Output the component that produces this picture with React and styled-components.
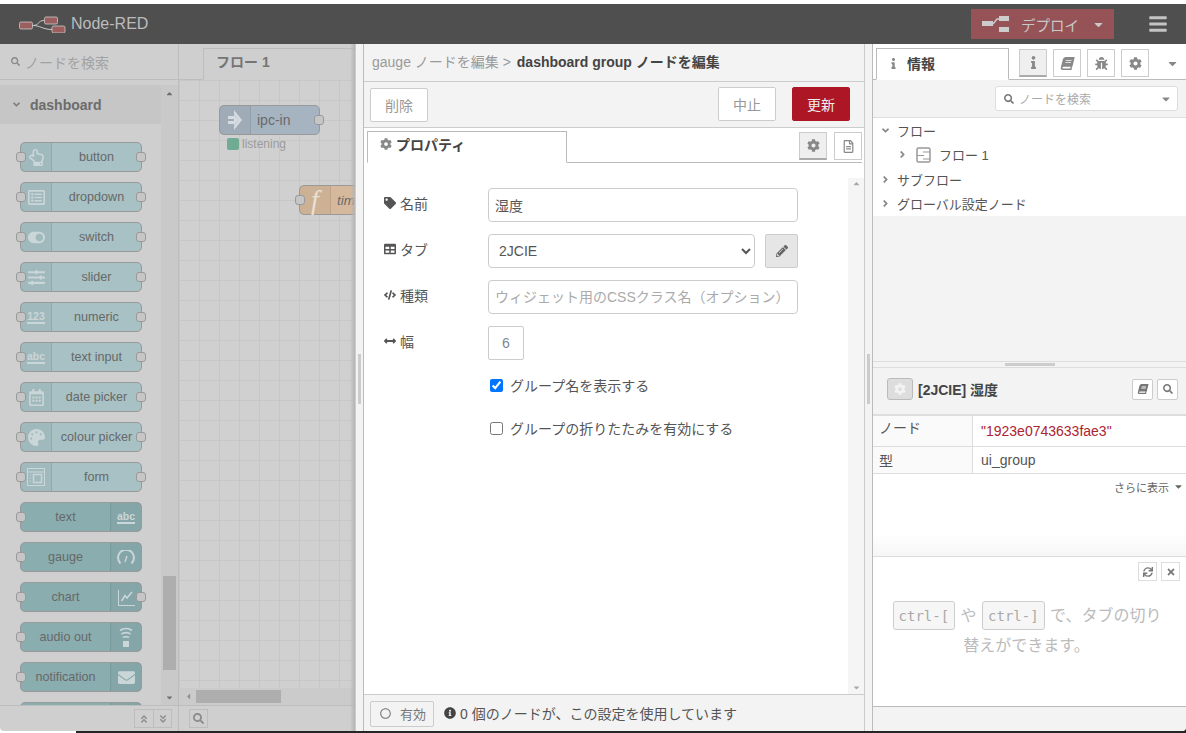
import React from "react";
import styled, { createGlobalStyle } from "styled-components";
import {
  FaRegHandPointUp, FaRegListAlt, FaToggleOn, FaSlidersH, FaRegCalendarAlt, FaPalette,
  FaEnvelope, FaSearch, FaCog, FaTag, FaTable, FaCode, FaArrowsAltH, FaPencilAlt,
  FaInfo, FaBook, FaBug, FaCaretDown, FaCaretUp, FaCaretLeft, FaBars, FaAngleDown, FaAngleRight,
  FaAngleDoubleUp, FaAngleDoubleDown, FaRegFileAlt, FaSync, FaTimes, FaInfoCircle, FaRegCircle,
} from "react-icons/fa";

const UI_FONT = `"Liberation Sans", "Noto Sans CJK JP", sans-serif`;

const GlobalStyle = createGlobalStyle`
  html, body { margin: 0; padding: 0; height: 100%; }
  body {
    background: linear-gradient(90deg, #fff 76px, #262626 76px);
    font-family: ${UI_FONT};
    font-size: 14px;
    overflow: hidden;
  }
  * { box-sizing: border-box; }
`;

const Shell = styled.div`
  width: 1186px;
  height: 733px;
  display: flex;
  flex-direction: column;
  background: linear-gradient(#fff 4px, transparent 4px);
  padding-top: 4px;
  padding-bottom: 2px;
`;

/* header */
const Header = styled.header`
  height: 40px;
  flex: none;
  background: #4f4f4f;
  display: flex;
  align-items: center;
  padding-left: 19px;
`;
const Brand = styled.div`
  display: flex;
  align-items: center;
  gap: 5px;
  color: #bcbcbc;
  font-size: 16px;
`;
const Deploy = styled.div`
  margin-left: auto;
  width: 143px;
  height: 30px;
  background: #955357;
  color: #c9c9c9;
  display: flex;
  align-items: center;
  padding-left: 11px;
  font-size: 14.5px;
  svg:first-child { margin-right: 12px; }
`;
const DeployCaret = styled(FaCaretDown)`
  margin-left: auto;
  margin-right: 9px;
  font-size: 13px;
`;
const Burger = styled(FaBars)`
  margin: 0 19px 0 35px;
  font-size: 18px;
  color: #c4c4c4;
  width: 18px;
  height: 20px;
`;

const Body = styled.div`
  flex: 1;
  min-height: 0;
  display: flex;
  border-radius: 0 0 4px 4px;
  overflow: hidden;
`;

/* palette */
const Palette = styled.aside`
  width: 179px;
  flex: none;
  background: #cfcfcf;
  border-right: 1px solid #bdbdbd;
  display: flex;
  flex-direction: column;
`;
const PaletteSearch = styled.div`
  height: 36px;
  flex: none;
  border-bottom: 1px solid #bdbdbd;
  display: flex;
  align-items: center;
  gap: 5px;
  padding-left: 11px;
  color: #a2a2a2;
  font-size: 14px;
  svg { font-size: 9px; color: #8a8a8a; }
`;
const PaletteBody = styled.div`
  flex: 1;
  min-height: 0;
  display: flex;
  padding-top: 5px;
`;
const PaletteColumn = styled.div`
  width: 161px;
  flex: none;
  display: flex;
  flex-direction: column;
  overflow: hidden;
`;
const CategoryHead = styled.div`
  height: 39px;
  flex: none;
  background: #c6c6c6;
  display: flex;
  align-items: center;
  padding-left: 11px;
  gap: 8px;
  color: #6c6c6c;
  font-weight: 700;
  font-size: 14px;
  svg { font-size: 11px; color: #808080; }
`;
const NodeList = styled.div`
  padding: 18px 0 0 20px;
  display: flex;
  flex-direction: column;
  gap: 10px;
`;
const PaletteNode = styled.div`
  position: relative;
  flex: none;
  width: 122px;
  height: 30px;
  border: 1px solid #999;
  border-radius: 5px;
  background: ${(p) => (p.$out ? "#8aadb0" : "#a7c1c4")};
  color: #686868;
  font-size: 12.6px;
  display: flex;
  flex-direction: ${(p) => (p.$out ? "row-reverse" : "row")};
`;
const NodeIcon = styled.div`
  width: 31px;
  flex: none;
  display: flex;
  align-items: center;
  justify-content: center;
  color: #cbd6d8;
  background: rgba(0, 0, 0, 0.04);
  border-${(p) => (p.$out ? "left" : "right")}: 1px solid rgba(0, 0, 0, 0.08);
  font-size: 17px;
`;
const FunctionGlyph = styled.span`
  font-family: "Liberation Serif", serif;
  font-style: italic;
  font-size: 28px;
  line-height: 28px;
  color: #e8e0d4;
`;
const NodeGlyph = styled.span`
  font-weight: 700;
  font-size: 10.5px;
  line-height: 11px;
  border-bottom: 2px solid #cbd6d8;
`;
const NodeText = styled.div`
  flex: 1;
  display: flex;
  align-items: center;
  justify-content: center;
  white-space: nowrap;
`;
const FlowText = styled.div`
  flex: 1;
  display: flex;
  align-items: center;
  padding-left: 6px;
  white-space: nowrap;
`;
const Port = styled.span`
  position: absolute;
  top: 9px;
  ${(p) => (p.$side === "left" ? "left: -5px" : "right: -5px")};
  width: 10px;
  height: 10px;
  border: 1px solid #999;
  border-radius: 3px;
  background: #c6c6c6;
`;
const VScroll = styled.div`
  width: 17px;
  flex: none;
  background: #c9c9c9;
  display: flex;
  flex-direction: column;
  align-items: center;
  padding: 0 1px;
  position: relative;
  font-size: 9px;
  color: #6f6f6f;
`;
const VArrow = styled.div`
  height: 16px;
  flex: none;
  display: flex;
  align-items: center;
`;
const VThumb = styled.div`
  margin-top: auto;
  width: 13px;
  height: 94px;
  margin-bottom: 19px;
  background: #aeaeae;
`;
const PaletteFoot = styled.div`
  height: 26px;
  flex: none;
  border-top: 1px solid #bdbdbd;
  display: flex;
  justify-content: flex-end;
  align-items: center;
  padding-right: 6px;
`;
const FootGroup = styled.div`
  display: flex;
  border: 1px solid #bdbdbd;
  height: 19px;
`;
const FootBtn = styled.div`
  width: 18px;
  display: flex;
  align-items: center;
  justify-content: center;
  color: #8f8f8f;
  font-size: 10px;
  & + & { border-left: 1px solid #bdbdbd; }
`;

/* workspace */
const Workspace = styled.main`
  width: 176px;
  flex: none;
  display: flex;
  flex-direction: column;
  background: #cfcfcf;
  position: relative;
  overflow: hidden;
  &::after {
    content: "";
    position: absolute;
    top: 0;
    right: 0;
    bottom: 0;
    width: 5px;
    background: linear-gradient(90deg, transparent, #b3b3b3);
  }
`;
const TabBar = styled.div`
  height: 36px;
  flex: none;
  padding: 4px 0 0 24px;
  border-bottom: 1px solid #bdbdbd;
`;
const FlowTab = styled.div`
  height: 32px;
  border: 1px solid #bdbdbd;
  border-bottom-color: #cfcfcf;
  border-right: none;
  color: #757575;
  padding-left: 12px;
  font-size: 14px;
  line-height: 27px;
  font-weight: 700;
`;
const Canvas = styled.div`
  flex: 1;
  position: relative;
  overflow: hidden;
  background-color: #d0d0d0;
  background-image: linear-gradient(#c7c7c7 1px, transparent 1px),
    linear-gradient(90deg, #c7c7c7 1px, transparent 1px);
  background-size: 20px 20px;
`;
const FlowNode = styled.div`
  position: absolute;
  left: ${(p) => p.$x}px;
  top: ${(p) => p.$y}px;
  width: ${(p) => p.$w}px;
  height: 30px;
  border: 1px solid #999;
  border-radius: 5px;
  background: ${(p) => p.$bg};
  color: #6a6a6a;
  display: flex;
  font-size: ${(p) => (p.$italic ? "13.4px" : "14px")};
  font-style: ${(p) => (p.$italic ? "italic" : "normal")};
`;
const FlowStatus = styled.div`
  position: absolute;
  left: 48px;
  top: 57px;
  display: flex;
  align-items: center;
  gap: 3px;
  color: #9b9b9b;
  font-size: 12px;
`;
const StatusDot = styled.span`
  width: 12px;
  height: 12px;
  border-radius: 2px;
  background: #72ab94;
`;
const HScroll = styled.div`
  height: 17px;
  flex: none;
  background: #cbcbcb;
  display: flex;
  align-items: center;
  padding-left: 5px;
  color: #909090;
  font-size: 9px;
`;
const HThumb = styled.div`
  margin-left: 3px;
  width: 85px;
  height: 13px;
  background: #aeaeae;
`;
const WorkspaceFoot = styled.div`
  height: 26px;
  flex: none;
  border-top: 1px solid #bdbdbd;
  display: flex;
  align-items: center;
  padding-left: 10px;
`;
const FootSearch = styled.div`
  width: 19px;
  height: 19px;
  border: 1px solid #bdbdbd;
  display: flex;
  align-items: center;
  justify-content: center;
  color: #8a8a8a;
  font-size: 11px;
`;

/* splitters */
const Splitter = styled.div`
  width: ${(p) => p.$w}px;
  flex: none;
  background: #f3f3f3;
  border-right: 1px solid #bbb;
  border-left: ${(p) => (p.$edge ? "1px solid #ccc" : "none")};
  display: flex;
  align-items: center;
  justify-content: center;
`;
const SplitHandle = styled.div`
  width: 3px;
  height: 50px;
  margin-top: -18px;
  background: #ccc;
`;

/* edit dialog */
const Dialog = styled.section`
  width: 500px;
  flex: none;
  background: #fff;
  display: flex;
  flex-direction: column;
`;
const DialogTitle = styled.div`
  height: 38px;
  flex: none;
  background: #f3f3f3;
  border-bottom: 1px solid #ccc;
  display: flex;
  align-items: center;
  padding-left: 8px;
  padding-bottom: 3px;
  color: #999;
  font-size: 14px;
  white-space: pre;
  b { color: #444; margin-left: 2px; }
`;
const DialogButtons = styled.div`
  height: 46px;
  flex: none;
  background: #f3f3f3;
  border-bottom: 1px solid #ccc;
  display: flex;
  align-items: center;
  padding: 0 14px 0 6px;
  gap: 16px;
`;
const TrayButton = styled.div`
  width: 58px;
  height: 34px;
  display: flex;
  align-items: center;
  justify-content: center;
  font-size: 14px;
  border-radius: 2px;
  background: ${(p) => (p.$primary ? "#ad1625" : "#fff")};
  color: ${(p) => (p.$primary ? "#eee" : "#999")};
  border: 1px solid ${(p) => (p.$primary ? "#ad1625" : "#ccc")};
  margin-top: ${(p) => (p.$low ? "1px" : "-1px")};
  margin-right: ${(p) => (p.$spread ? "auto" : "0")};
`;
const TabRow = styled.div`
  height: 35px;
  flex: none;
  display: flex;
  align-items: flex-end;
  margin: 0 2px 0 3px;
  border-bottom: 1px solid #bbb;
`;
const EditTab = styled.div`
  width: 200px;
  height: 32px;
  margin-bottom: -1px;
  border: 1px solid #bbb;
  border-bottom: 1px solid #fff;
  display: flex;
  align-items: center;
  gap: 4px;
  padding: 0 0 6px 12px;
  color: #444;
  font-weight: 700;
  font-size: 14px;
  svg { color: #888; font-size: 12px; }
`;
const TabIcons = styled.div`
  margin-left: auto;
  align-self: flex-start;
  margin-top: 4px;
  display: flex;
  gap: 7px;
`;
const IconTab = styled.div`
  width: 28px;
  height: 28px;
  display: flex;
  align-items: center;
  justify-content: center;
  border: 1px solid #ccc;
  border-bottom: ${(p) => (p.$active ? "2px solid #aaa" : "1px solid #ccc")};
  background: ${(p) => (p.$active ? "#efefef" : "#fff")};
  color: #888;
  font-size: 13px;
`;
const SlantedBook = styled(FaBook)`
  transform: skewX(-14deg);
`;
const FormWrap = styled.div`
  flex: 1;
  min-height: 0;
  display: flex;
`;
const Form = styled.div`
  flex: 1;
  padding: 25px 0 0 20px;
  display: flex;
  flex-direction: column;
  gap: 12px;
`;
const FormRow = styled.div`
  display: flex;
  align-items: flex-start;
  gap: 10px;
`;
const Label = styled.label`
  width: 94px;
  flex: none;
  display: flex;
  align-items: center;
  gap: 4px;
  color: #555;
  font-size: 14px;
  height: 30px;
  svg { font-size: 12px; color: #555; }
`;
const Field = styled.input`
  width: ${(p) => p.$w || 310}px;
  height: 34px;
  padding: 0 6px;
  border: 1px solid #ccc;
  border-radius: 4px;
  font: 14px ${UI_FONT};
  color: #555;
  outline: none;
  &::placeholder { color: #aaa; }
`;
const WidthField = styled(Field)`
  text-align: center;
  color: #7b8894;
  border-radius: 2px;
`;
const TabSelect = styled.select`
  width: 267px;
  height: 34px;
  padding: 0 6px;
  border: 1px solid #ccc;
  border-radius: 4px;
  background: #fff;
  font: 14px ${UI_FONT};
  color: #555;
  outline: none;
`;
const EditButton = styled.div`
  width: 33px;
  height: 34px;
  border: 1px solid #ccc;
  border-radius: 2px;
  background: #e6e6e6;
  color: #666;
  font-size: 12px;
  display: flex;
  align-items: center;
  justify-content: center;
`;
const CheckRow = styled.label`
  margin: ${(p) => p.$top}px 0 0 94px;
  padding-left: 12px;
  display: flex;
  align-items: center;
  gap: 7px;
  color: #555;
  font-size: 14px;
  height: 18px;
  input { margin: 0; width: 13px; height: 13px; }
`;
const FormTrack = styled.div`
  width: 16px;
  flex: none;
  margin-top: 15px;
  background: #f5f5f5;
  display: flex;
  flex-direction: column;
  align-items: center;
  justify-content: space-between;
  padding: 1px 0 2px;
  color: #a8a8a8;
  font-size: 9px;
`;
const DialogFoot = styled.div`
  height: 37px;
  flex: none;
  background: #f3f3f3;
  border-top: 1px solid #ccc;
  display: flex;
  align-items: center;
  padding: 0 0 1px 6px;
  color: #555;
  font-size: 14px;
`;
const EnableButton = styled.div`
  width: 64px;
  height: 26px;
  border: 1px solid #ccc;
  border-radius: 2px;
  display: flex;
  align-items: center;
  gap: 9px;
  padding-left: 9px;
  margin: 2px 10px 0 0;
  color: #777;
  font-size: 13px;
  svg { font-size: 11px; }
`;
const UsageNote = styled.div`
  display: flex;
  align-items: center;
  gap: 4px;
  svg { font-size: 12px; color: #444; }
`;

/* sidebar */
const Sidebar = styled.aside`
  flex: 1;
  min-width: 0;
  display: flex;
  flex-direction: column;
  background: #fff;
`;
const SideTabs = styled.div`
  height: 36px;
  flex: none;
  display: flex;
  align-items: flex-end;
  padding-left: 3px;
  border-bottom: 1px solid #bbb;
`;
const SideTab = styled.div`
  width: 133px;
  height: 32px;
  margin-bottom: -1px;
  border: 1px solid #bbb;
  border-bottom: 1px solid #fff;
  display: flex;
  align-items: center;
  padding: 0 0 2px 11px;
  gap: 8px;
  color: #444;
  font-weight: 700;
  font-size: 14px;
  svg { font-size: 11px; color: #888; }
`;
const SideTabIcons = styled.div`
  align-self: flex-start;
  margin: 5px 0 0 10px;
  display: flex;
  gap: 6px;
  align-items: center;
`;
const SideCaret = styled(FaCaretDown)`
  margin-left: 11px;
  color: #888;
  font-size: 13px;
`;
const Filter = styled.div`
  height: 38px;
  flex: none;
  background: #f3f3f3;
  border-bottom: 1px solid #ddd;
  display: flex;
  align-items: center;
  justify-content: flex-end;
  padding: 0 8px 0 0;
`;
const FilterBox = styled.div`
  width: 183px;
  height: 25px;
  background: #fff;
  border: 1px solid #ddd;
  border-radius: 3px;
  display: flex;
  align-items: center;
  gap: 5px;
  padding: 0 5px 0 8px;
  color: #aaa;
  font-size: 12px;
  svg:first-child { font-size: 10px; color: #777; }
  svg:last-child { margin-left: auto; font-size: 12px; color: #888; }
`;
const TreePane = styled.div`
  height: 243px;
  flex: none;
  background: #f3f3f3;
`;
const Tree = styled.div`
  background: #fff;
  height: 98px;
`;
const TreeRow = styled.div`
  height: 24.5px;
  display: flex;
  align-items: center;
  padding-left: ${(p) => p.$indent || 7}px;
  gap: ${(p) => p.$gap || 6}px;
  color: #555;
  font-size: 13px;
  svg:first-child { font-size: 11px; color: #888; flex: none; }
`;
const SideSplit = styled.div`
  height: 7px;
  flex: none;
  background: #f3f3f3;
  border-top: 1px solid #ddd;
  border-bottom: 1px solid #ddd;
  display: flex;
  align-items: center;
  justify-content: center;
`;
const SideHandle = styled.div`
  width: 50px;
  height: 3px;
  background: #ccc;
`;
const InfoHead = styled.div`
  height: 48px;
  flex: none;
  background: #f3f3f3;
  border-bottom: 2px solid #ddd;
  display: flex;
  align-items: center;
  padding: 0 8px 4px 14px;
  color: #444;
  font-weight: 700;
  font-size: 14px;
`;
const ConfigBadge = styled.div`
  width: 26px;
  height: 22px;
  margin-right: 5px;
  background: #ddd;
  border: 1px solid #bbb;
  border-radius: 3px;
  color: #f3f3f3;
  font-size: 12px;
  display: flex;
  align-items: center;
  justify-content: center;
`;
const MiniButtons = styled.div`
  margin-left: auto;
  display: flex;
  gap: 4px;
`;
const MiniButton = styled.div`
  width: 21px;
  height: 21px;
  border: 1px solid #ccc;
  border-radius: 2px;
  background: #fff;
  color: #777;
  font-size: 10px;
  display: flex;
  align-items: center;
  justify-content: center;
`;
const InfoTable = styled.div`
  flex: none;
`;
const InfoRow = styled.div`
  height: ${(p) => p.$h}px;
  display: flex;
  border-bottom: 1px solid #ddd;
  font-size: 14px;
  color: #555;
`;
const InfoKey = styled.div`
  width: 100px;
  flex: none;
  padding: ${(p) => (p.$raised ? "1px" : "3px")} 0 0 6px;
  border-right: 1px solid #ddd;
  background: #fafafa;
`;
const InfoValue = styled.div`
  padding: ${(p) => p.$top}px 0 0 8px;
  color: ${(p) => (p.$red ? "#ad2431" : "#555")};
  font-size: 14px;
`;
const MoreLink = styled.div`
  height: 25px;
  display: flex;
  align-items: center;
  justify-content: flex-end;
  gap: 4px;
  padding: 0 2px 0 0;
  color: #666;
  font-size: 11px;
  svg { font-size: 11px; }
`;
const InfoSpace = styled.div`
  flex: 1;
  background: linear-gradient(transparent 60%, #f6f6f6);
  min-height: 0;
  border-bottom: 1px solid #ddd;
`;
const HelpPane = styled.div`
  height: 149px;
  flex: none;
  position: relative;
  padding: 44px 20px 0 14px;
  text-align: center;
  color: #bbb;
  font-size: 16px;
  line-height: 30px;
`;
const HelpTools = styled.div`
  position: absolute;
  top: 5px;
  right: 6px;
  display: flex;
  gap: 4px;
`;
const HelpTool = styled.div`
  width: 19px;
  height: 19px;
  border: 1px solid #ddd;
  color: #777;
  font-size: 10px;
  display: flex;
  align-items: center;
  justify-content: center;
`;
const Kbd = styled.span`
  display: inline-block;
  height: 29px;
  padding: 0 5px;
  margin: 0 1px;
  line-height: 29px;
  border: 1px solid #ccc;
  border-radius: 3px;
  background: #f6f6f6;
  color: #aaa;
  font-family: "DejaVu Sans Mono", monospace;
  font-size: 14px;
`;
const SideFoot = styled.div`
  height: 25px;
  flex: none;
  background: #f3f3f3;
  border-top: 1px solid #bbb;
`;

const Logo = () => (
  <svg width="47" height="17" viewBox="0 0 47 17">
    <rect x="0.5" y="6" width="13" height="7" rx="1.5" fill="#9c5f60" stroke="#ccc" strokeWidth=".8" />
    <rect x="25.5" y="1" width="13" height="7" rx="1.5" fill="#9c5f60" stroke="#ccc" strokeWidth=".8" />
    <rect x="33" y="10" width="13" height="7" rx="1.5" fill="#9c5f60" stroke="#ccc" strokeWidth=".8" />
    <path d="M14 9.5C20 9.5 19 4.5 25 4.5M14 9.5C21 9.5 24 13.5 33 13.5" fill="none" stroke="#ccc" strokeWidth="1" />
  </svg>
);

const DeployIcon = () => (
  <svg width="27" height="16" viewBox="0 0 27 16">
    <rect x="0" y="5" width="11" height="5" fill="#ccc" />
    <rect x="17" y="0" width="10" height="5" fill="#ccc" />
    <rect x="17" y="11" width="10" height="5" fill="#ccc" />
    <path d="M11 8L15 3H17" fill="none" stroke="#ccc" strokeWidth="1.4" />
  </svg>
);

const BridgeIcon = () => (
  <svg width="14" height="20" viewBox="0 0 14 20" fill="#d5dbe0">
    <rect x="0" y="6" width="6" height="3" />
    <rect x="0" y="11" width="6" height="3" />
    <path d="M6 0L14 10L6 20V16L10.5 10L6 4Z" />
    <path d="M6 4.5L10.5 10L6 15.5Z" />
  </svg>
);

const FormIcon = () => (
  <svg width="20" height="20" viewBox="0 0 20 20" fill="none" stroke="currentColor" strokeWidth="1">
    <rect x="1.5" y="1.5" width="17" height="17" />
    <path d="M1.5 5H18.5M3.5 8H5M3.5 11H5M3.5 14H5" />
    <rect x="7.5" y="7.5" width="8" height="8" strokeWidth="1.5" />
  </svg>
);

const GaugeIcon = () => (
  <svg width="18" height="14" viewBox="0 0 18 14" fill="none" stroke="currentColor" strokeWidth="2">
    <path d="M3.5 13.5A8 8 0 1 1 14.5 13.5" />
    <path d="M8 12L10 6" strokeWidth="1.4" />
  </svg>
);

const ChartIcon = () => (
  <svg width="17" height="17" viewBox="0 0 17 17" fill="none" stroke="currentColor">
    <path d="M.5 1V16.5H17" />
    <path d="M3.5 12L7 6.5L9 9L14 3" strokeWidth="1.6" />
  </svg>
);

const AudioIcon = () => (
  <svg width="14" height="20" viewBox="0 0 14 20" fill="none" stroke="currentColor" strokeWidth="1.6">
    <path d="M1 3.5C4.5.8 9.5.8 13 3.5M2.5 7C5 5.2 9 5.2 11.5 7M4 10.5C5.5 9.4 8.5 9.4 10 10.5" />
    <rect x="4" y="14" width="6" height="6" fill="currentColor" stroke="none" />
  </svg>
);

const FlowIcon = () => (
  <svg width="15" height="16" viewBox="0 0 15 16" fill="none" stroke="#999" strokeWidth="1.5">
    <rect x="1" y="1" width="13" height="14" rx="1.5" />
    <path d="M7 5H14M1 8.5H8M7 12H14" strokeWidth="1.2" />
  </svg>
);

const TextGlyph = ({ children }) => <NodeGlyph>{children}</NodeGlyph>;

const PALETTE = [
  { id: "button", label: "button", icon: <FaRegHandPointUp />, outPort: true },
  { id: "dropdown", label: "dropdown", icon: <FaRegListAlt />, outPort: true },
  { id: "switch", label: "switch", icon: <FaToggleOn />, outPort: true },
  { id: "slider", label: "slider", icon: <FaSlidersH />, outPort: true },
  { id: "numeric", label: "numeric", icon: <TextGlyph>123</TextGlyph>, outPort: true },
  { id: "text-input", label: "text input", icon: <TextGlyph>abc</TextGlyph>, outPort: true },
  { id: "date", label: "date picker", icon: <FaRegCalendarAlt />, outPort: true },
  { id: "colour", label: "colour picker", icon: <FaPalette />, outPort: true },
  { id: "form", label: "form", icon: <FormIcon />, outPort: true },
  { id: "text", label: "text", icon: <TextGlyph>abc</TextGlyph>, out: true },
  { id: "gauge", label: "gauge", icon: <GaugeIcon />, out: true },
  { id: "chart", label: "chart", icon: <ChartIcon />, out: true, outPort: true },
  { id: "audio", label: "audio out", icon: <AudioIcon />, out: true },
  { id: "notification", label: "notification", icon: <FaEnvelope />, out: true },
  { id: "cut-off", label: "", out: true },
];

const App = () => (
  <>
    <GlobalStyle />
    <Shell>
      <Header>
        <Brand>
          <Logo />
          Node-RED
        </Brand>
        <Deploy>
          <DeployIcon />
          デプロイ
          <DeployCaret />
        </Deploy>
        <Burger />
      </Header>
      <Body>
        <Palette>
          <PaletteSearch>
            <FaSearch />
            ノードを検索
          </PaletteSearch>
          <PaletteBody>
            <PaletteColumn>
              <CategoryHead>
                <FaAngleDown />
                dashboard
              </CategoryHead>
              <NodeList>
                {PALETTE.map((n) => (
                  <PaletteNode key={n.id} $out={n.out}>
                    <NodeIcon $out={n.out}>{n.icon}</NodeIcon>
                    <NodeText>{n.label}</NodeText>
                    <Port $side="left" />
                    {n.outPort && <Port $side="right" />}
                  </PaletteNode>
                ))}
              </NodeList>
            </PaletteColumn>
            <VScroll>
              <VArrow><FaCaretUp /></VArrow>
              <VThumb />
              <VArrow><FaCaretDown /></VArrow>
            </VScroll>
          </PaletteBody>
          <PaletteFoot>
            <FootGroup>
              <FootBtn><FaAngleDoubleUp /></FootBtn>
              <FootBtn><FaAngleDoubleDown /></FootBtn>
            </FootGroup>
          </PaletteFoot>
        </Palette>

        <Workspace>
          <TabBar>
            <FlowTab>フロー 1</FlowTab>
          </TabBar>
          <Canvas>
            <FlowNode $x={40} $y={25} $w={101} $bg="#a6b3c0">
              <NodeIcon><BridgeIcon /></NodeIcon>
              <FlowText>ipc-in</FlowText>
              <Port $side="right" />
            </FlowNode>
            <FlowStatus>
              <StatusDot />
              listening
            </FlowStatus>
            <FlowNode $x={120} $y={105} $w={120} $bg="#d6b99c" $italic>
              <NodeIcon><FunctionGlyph>f</FunctionGlyph></NodeIcon>
              <FlowText>tim</FlowText>
              <Port $side="left" />
            </FlowNode>
          </Canvas>
          <HScroll>
            <FaCaretLeft />
            <HThumb />
          </HScroll>
          <WorkspaceFoot>
            <FootSearch><FaSearch /></FootSearch>
          </WorkspaceFoot>
        </Workspace>

        <Splitter $w={9} $edge><SplitHandle /></Splitter>

        <Dialog>
          <DialogTitle>
            gauge ノードを編集 {">"} <b>dashboard group ノードを編集</b>
          </DialogTitle>
          <DialogButtons>
            <TrayButton $low $spread>削除</TrayButton>
            <TrayButton>中止</TrayButton>
            <TrayButton $primary>更新</TrayButton>
          </DialogButtons>
          <TabRow>
            <EditTab><FaCog />プロパティ</EditTab>
            <TabIcons>
              <IconTab $active><FaCog /></IconTab>
              <IconTab><FaRegFileAlt /></IconTab>
            </TabIcons>
          </TabRow>
          <FormWrap>
            <Form>
              <FormRow>
                <Label><FaTag />名前</Label>
                <Field defaultValue="湿度" />
              </FormRow>
              <FormRow>
                <Label><FaTable />タブ</Label>
                <TabSelect defaultValue="2JCIE"><option>2JCIE</option></TabSelect>
                <EditButton><FaPencilAlt /></EditButton>
              </FormRow>
              <FormRow>
                <Label><FaCode />種類</Label>
                <Field placeholder="ウィジェット用のCSSクラス名（オプション）" />
              </FormRow>
              <FormRow>
                <Label><FaArrowsAltH />幅</Label>
                <WidthField $w={36} defaultValue="6" />
              </FormRow>
              <CheckRow $top={4}><input type="checkbox" defaultChecked />グループ名を表示する</CheckRow>
              <CheckRow $top={13}><input type="checkbox" />グループの折りたたみを有効にする</CheckRow>
            </Form>
            <FormTrack>
              <FaCaretUp />
              <FaCaretDown />
            </FormTrack>
          </FormWrap>
          <DialogFoot>
            <EnableButton><FaRegCircle />有効</EnableButton>
            <UsageNote><FaInfoCircle />0 個のノードが、この設定を使用しています</UsageNote>
          </DialogFoot>
        </Dialog>

        <Splitter $w={9} $edge><SplitHandle /></Splitter>

        <Sidebar>
          <SideTabs>
            <SideTab><FaInfo />情報</SideTab>
            <SideTabIcons>
              <IconTab $active><FaInfo /></IconTab>
              <IconTab><SlantedBook /></IconTab>
              <IconTab><FaBug /></IconTab>
              <IconTab><FaCog /></IconTab>
              <SideCaret />
            </SideTabIcons>
          </SideTabs>
          <Filter>
            <FilterBox>
              <FaSearch />
              ノードを検索
              <FaCaretDown />
            </FilterBox>
          </Filter>
          <TreePane>
            <Tree>
              <TreeRow><FaAngleDown />フロー</TreeRow>
              <TreeRow $indent={24} $gap={8}><FaAngleRight /><FlowIcon />フロー 1</TreeRow>
              <TreeRow><FaAngleRight />サブフロー</TreeRow>
              <TreeRow><FaAngleRight />グローバル設定ノード</TreeRow>
            </Tree>
          </TreePane>
          <SideSplit><SideHandle /></SideSplit>
          <InfoHead>
            <ConfigBadge><FaCog /></ConfigBadge>
            [2JCIE] 湿度
            <MiniButtons>
              <MiniButton><SlantedBook /></MiniButton>
              <MiniButton><FaSearch /></MiniButton>
            </MiniButtons>
          </InfoHead>
          <InfoTable>
            <InfoRow $h={31}>
              <InfoKey $raised>ノード</InfoKey>
              <InfoValue $red $top={7}>"1923e0743633fae3"</InfoValue>
            </InfoRow>
            <InfoRow $h={27}>
              <InfoKey>型</InfoKey>
              <InfoValue $top={5}>ui_group</InfoValue>
            </InfoRow>
          </InfoTable>
          <MoreLink>さらに表示<FaCaretDown /></MoreLink>
          <InfoSpace />
          <HelpPane>
            <HelpTools>
              <HelpTool><FaSync /></HelpTool>
              <HelpTool><FaTimes /></HelpTool>
            </HelpTools>
            <Kbd>ctrl-[</Kbd> や <Kbd>ctrl-]</Kbd> で、タブの切り
            <br />
            替えができます。
          </HelpPane>
          <SideFoot />
        </Sidebar>
      </Body>
    </Shell>
  </>
);

export default App;
